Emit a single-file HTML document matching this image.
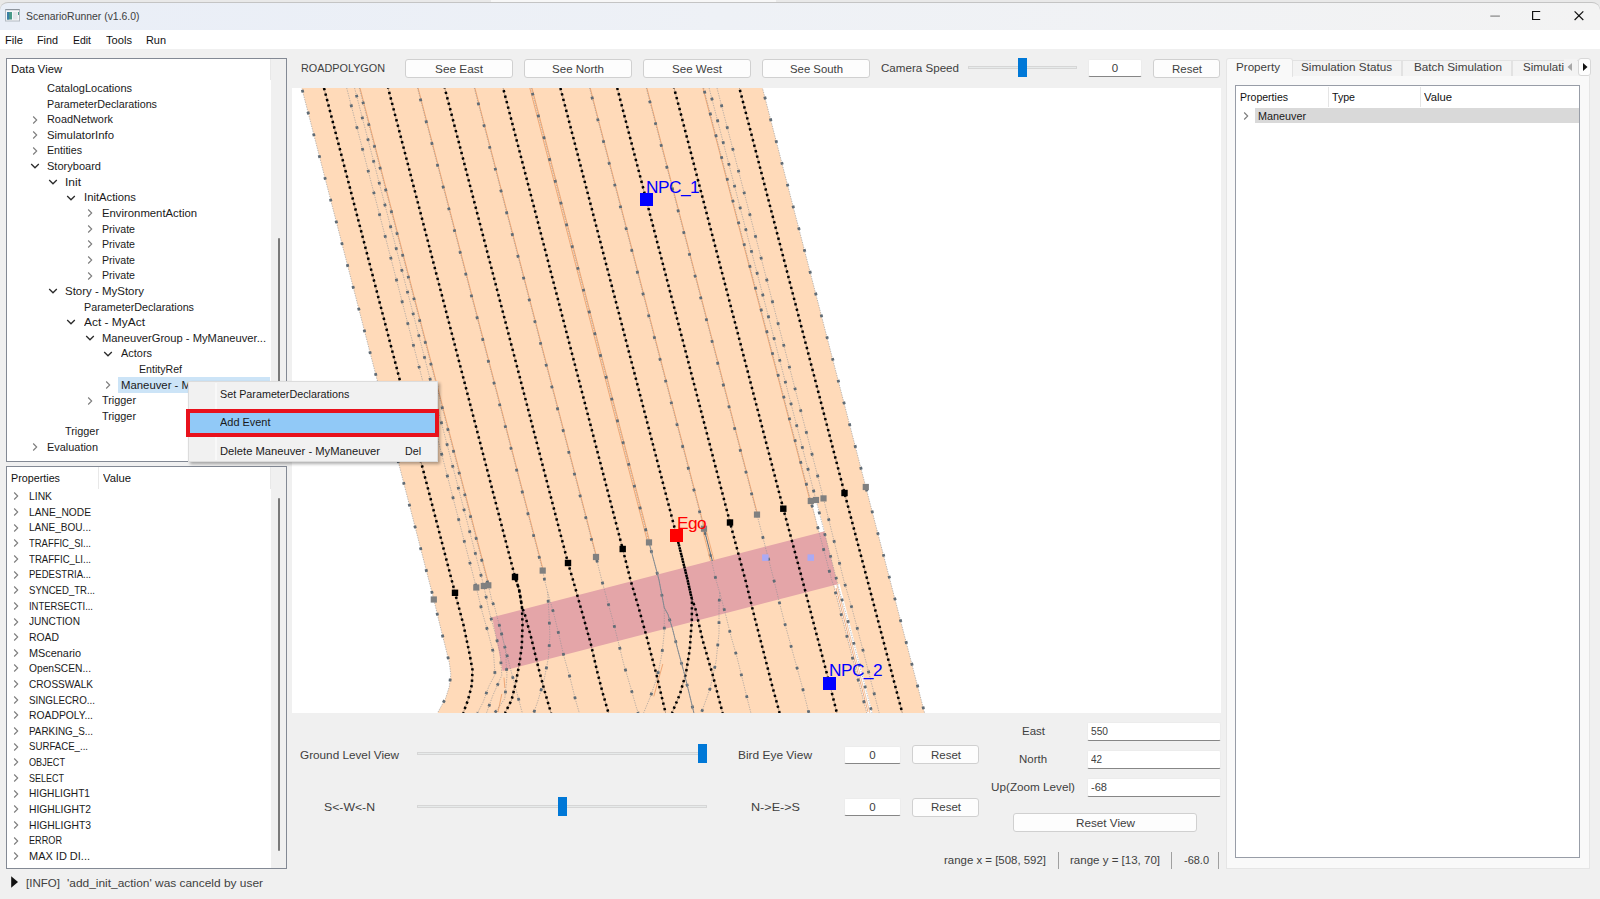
<!DOCTYPE html>
<html lang="en"><head><meta charset="utf-8"><title>ScenarioRunner (v1.6.0)</title>
<style>
html,body{margin:0;padding:0;background:#f0f0f0;}
body{width:1600px;height:899px;overflow:hidden;position:relative;font-family:"Liberation Sans","Noto Sans CJK KR",sans-serif;}
#app{position:absolute;left:0;top:0;width:1600px;height:899px;overflow:hidden;background:#f0f0f0;}
.t{position:absolute;white-space:nowrap;line-height:16px;height:16px;transform-origin:0 50%;}
.g{color:#333;}
.ic{position:absolute;overflow:visible;}
.btn{position:absolute;box-sizing:border-box;background:#fdfdfd;border:1px solid #d0d0d0;border-radius:3px;}
.inp{position:absolute;box-sizing:border-box;background:#fff;border:1px solid #ececec;border-bottom:1px solid #868686;border-radius:2px;}
</style></head>
<body><div id="app">
<div style="position:absolute;left:0.0px;top:0.0px;width:1600.0px;height:30.0px;background:#e9e9e9;"></div>
<div style="position:absolute;left:0.0px;top:2.0px;width:1600.0px;height:28.0px;box-sizing:border-box;background:linear-gradient(90deg,#e9eef7 0%,#eef1f6 45%,#f3f3f3 100%);border-top:1px solid #c4c4c4;border-radius:8px 8px 0 0;"></div>
<div style="position:absolute;left:491.0px;top:0.0px;width:285.0px;height:2.0px;background:#f7f7f7;"></div>
<svg class="ic" style="left:5px;top:9px" width="15" height="13" viewBox="0 0 15 13"><rect x="0.5" y="0.5" width="14" height="11.5" fill="#f6f7f9" stroke="#b4bac2"/><rect x="0.5" y="0" width="14" height="1.200" fill="#8e959e"/><rect x="2" y="3" width="5" height="7.500" fill="#4a9a88"/><rect x="2" y="3" width="2.200" height="7.500" fill="#3b7fa6"/><rect x="8" y="3" width="4.500" height="7.500" fill="#e3e6ea"/><rect x="13" y="3" width="1" height="3" fill="#4a9a88"/></svg>
<span class="t " style="left:26.0px;top:8.0px;font-size:11.50px;color:#404040;transform:scaleX(0.9059);">ScenarioRunner (v1.6.0)</span>
<svg class="ic" style="left:1480px;top:0" width="120" height="30" viewBox="0 0 120 30"><path d="M10.3 16.1 H19.9" stroke="#858585" stroke-width="1.200"/><path d="M60.2 11.5 H52.6 V19.5 H60.2" fill="none" stroke="#111" stroke-width="1.200"/><path d="M94.6 11.300 L103.3 20 M103.3 11.300 L94.6 20" stroke="#111" stroke-width="1.200"/></svg>
<div style="position:absolute;left:0.0px;top:30.0px;width:1600.0px;height:19.0px;background:#ffffff;"></div>
<span class="t " style="left:5.0px;top:32.0px;font-size:11.50px;color:#111;transform:scaleX(0.9714);">File</span>
<span class="t " style="left:37.0px;top:32.0px;font-size:11.50px;color:#111;transform:scaleX(0.9387);">Find</span>
<span class="t " style="left:73.0px;top:32.0px;font-size:11.50px;color:#111;transform:scaleX(0.9083);">Edit</span>
<span class="t " style="left:106.0px;top:32.0px;font-size:11.50px;color:#111;transform:scaleX(0.9685);">Tools</span>
<span class="t " style="left:146.0px;top:32.0px;font-size:11.50px;color:#111;transform:scaleX(0.9480);">Run</span>
<div style="position:absolute;left:6.0px;top:58.0px;width:281.0px;height:404.0px;box-sizing:border-box;background:#fff;border:1px solid #838994;"></div>
<div style="position:absolute;left:271.0px;top:59.0px;width:15.0px;height:402.0px;background:#f0f0f0;"></div>
<div style="position:absolute;left:270.0px;top:59.0px;width:1.0px;height:21.0px;background:#e8e8e8;"></div>
<div style="position:absolute;left:278.0px;top:238.0px;width:2.0px;height:217.0px;background:#7a7a7a;border-radius:1px;"></div>
<span class="t " style="left:11.3px;top:61.4px;font-size:11.50px;color:#111;transform:scaleX(0.9769);">Data View</span>
<span class="t " style="left:47.0px;top:80.0px;font-size:11.50px;color:#1a1a1a;transform:scaleX(0.9565);">CatalogLocations</span>
<span class="t " style="left:47.0px;top:95.6px;font-size:11.50px;color:#1a1a1a;transform:scaleX(0.9353);">ParameterDeclarations</span>
<svg class="ic" style="left:30.5px;top:114.5px" width="8" height="10" viewBox="0 0 8 10"><path d="M2.2 1.5 L5.700 5 L2.2 8.5" fill="none" stroke="#7c7c7c" stroke-width="1.100"/></svg>
<span class="t " style="left:47.0px;top:111.2px;font-size:11.50px;color:#1a1a1a;transform:scaleX(0.9473);">RoadNetwork</span>
<svg class="ic" style="left:30.5px;top:130.1px" width="8" height="10" viewBox="0 0 8 10"><path d="M2.2 1.5 L5.700 5 L2.2 8.5" fill="none" stroke="#7c7c7c" stroke-width="1.100"/></svg>
<span class="t " style="left:47.0px;top:126.8px;font-size:11.50px;color:#1a1a1a;transform:scaleX(0.9889);">SimulatorInfo</span>
<svg class="ic" style="left:30.5px;top:145.7px" width="8" height="10" viewBox="0 0 8 10"><path d="M2.2 1.5 L5.700 5 L2.2 8.5" fill="none" stroke="#7c7c7c" stroke-width="1.100"/></svg>
<span class="t " style="left:47.0px;top:142.4px;font-size:11.50px;color:#1a1a1a;transform:scaleX(0.9281);">Entities</span>
<svg class="ic" style="left:29.5px;top:162.4px" width="10" height="8" viewBox="0 0 10 8"><path d="M1.2 2 L5 5.8 L8.8 2" fill="none" stroke="#2b2b2b" stroke-width="1.3"/></svg>
<span class="t " style="left:47.0px;top:158.1px;font-size:11.50px;color:#1a1a1a;transform:scaleX(0.9599);">Storyboard</span>
<svg class="ic" style="left:47.9px;top:178.0px" width="10" height="8" viewBox="0 0 10 8"><path d="M1.2 2 L5 5.8 L8.8 2" fill="none" stroke="#2b2b2b" stroke-width="1.3"/></svg>
<span class="t " style="left:65.4px;top:173.7px;font-size:11.50px;color:#1a1a1a;transform:scaleX(1.0430);">Init</span>
<svg class="ic" style="left:66.3px;top:193.6px" width="10" height="8" viewBox="0 0 10 8"><path d="M1.2 2 L5 5.8 L8.8 2" fill="none" stroke="#2b2b2b" stroke-width="1.3"/></svg>
<span class="t " style="left:83.8px;top:189.3px;font-size:11.50px;color:#1a1a1a;transform:scaleX(0.9802);">InitActions</span>
<svg class="ic" style="left:85.7px;top:208.2px" width="8" height="10" viewBox="0 0 8 10"><path d="M2.2 1.5 L5.700 5 L2.2 8.5" fill="none" stroke="#7c7c7c" stroke-width="1.100"/></svg>
<span class="t " style="left:102.2px;top:204.9px;font-size:11.50px;color:#1a1a1a;transform:scaleX(0.9842);">EnvironmentAction</span>
<svg class="ic" style="left:85.7px;top:223.8px" width="8" height="10" viewBox="0 0 8 10"><path d="M2.2 1.5 L5.700 5 L2.2 8.5" fill="none" stroke="#7c7c7c" stroke-width="1.100"/></svg>
<span class="t " style="left:102.2px;top:220.5px;font-size:11.50px;color:#1a1a1a;transform:scaleX(0.9220);">Private</span>
<svg class="ic" style="left:85.7px;top:239.4px" width="8" height="10" viewBox="0 0 8 10"><path d="M2.2 1.5 L5.700 5 L2.2 8.5" fill="none" stroke="#7c7c7c" stroke-width="1.100"/></svg>
<span class="t " style="left:102.2px;top:236.1px;font-size:11.50px;color:#1a1a1a;transform:scaleX(0.9220);">Private</span>
<svg class="ic" style="left:85.7px;top:255.0px" width="8" height="10" viewBox="0 0 8 10"><path d="M2.2 1.5 L5.700 5 L2.2 8.5" fill="none" stroke="#7c7c7c" stroke-width="1.100"/></svg>
<span class="t " style="left:102.2px;top:251.7px;font-size:11.50px;color:#1a1a1a;transform:scaleX(0.9220);">Private</span>
<svg class="ic" style="left:85.7px;top:270.6px" width="8" height="10" viewBox="0 0 8 10"><path d="M2.2 1.5 L5.700 5 L2.2 8.5" fill="none" stroke="#7c7c7c" stroke-width="1.100"/></svg>
<span class="t " style="left:102.2px;top:267.3px;font-size:11.50px;color:#1a1a1a;transform:scaleX(0.9220);">Private</span>
<svg class="ic" style="left:47.9px;top:287.2px" width="10" height="8" viewBox="0 0 10 8"><path d="M1.2 2 L5 5.8 L8.8 2" fill="none" stroke="#2b2b2b" stroke-width="1.3"/></svg>
<span class="t " style="left:65.4px;top:282.9px;font-size:11.50px;color:#1a1a1a;transform:scaleX(0.9971);">Story - MyStory</span>
<span class="t " style="left:83.8px;top:298.5px;font-size:11.50px;color:#1a1a1a;transform:scaleX(0.9353);">ParameterDeclarations</span>
<svg class="ic" style="left:66.3px;top:318.4px" width="10" height="8" viewBox="0 0 10 8"><path d="M1.2 2 L5 5.8 L8.8 2" fill="none" stroke="#2b2b2b" stroke-width="1.3"/></svg>
<span class="t " style="left:83.8px;top:314.1px;font-size:11.50px;color:#1a1a1a;transform:scaleX(1.0378);">Act - MyAct</span>
<svg class="ic" style="left:84.7px;top:334.1px" width="10" height="8" viewBox="0 0 10 8"><path d="M1.2 2 L5 5.8 L8.8 2" fill="none" stroke="#2b2b2b" stroke-width="1.3"/></svg>
<span class="t " style="left:102.2px;top:329.8px;font-size:11.50px;color:#1a1a1a;transform:scaleX(0.9719);">ManeuverGroup - MyManeuver...</span>
<svg class="ic" style="left:103.1px;top:349.7px" width="10" height="8" viewBox="0 0 10 8"><path d="M1.2 2 L5 5.8 L8.8 2" fill="none" stroke="#2b2b2b" stroke-width="1.3"/></svg>
<span class="t " style="left:120.6px;top:345.4px;font-size:11.50px;color:#1a1a1a;transform:scaleX(0.9512);">Actors</span>
<span class="t " style="left:139.0px;top:361.0px;font-size:11.50px;color:#1a1a1a;transform:scaleX(0.9216);">EntityRef</span>
<div style="position:absolute;left:118.0px;top:376.6px;width:152.0px;height:16.0px;background:#cce4f7;"></div>
<svg class="ic" style="left:104.1px;top:379.9px" width="8" height="10" viewBox="0 0 8 10"><path d="M2.2 1.5 L5.700 5 L2.2 8.5" fill="none" stroke="#7c7c7c" stroke-width="1.100"/></svg>
<span class="t " style="left:120.6px;top:376.6px;font-size:11.50px;color:#1a1a1a;transform:scaleX(0.9868);">Maneuver - M</span>
<svg class="ic" style="left:85.7px;top:395.5px" width="8" height="10" viewBox="0 0 8 10"><path d="M2.2 1.5 L5.700 5 L2.2 8.5" fill="none" stroke="#7c7c7c" stroke-width="1.100"/></svg>
<span class="t " style="left:102.2px;top:392.2px;font-size:11.50px;color:#1a1a1a;transform:scaleX(0.9445);">Trigger</span>
<span class="t " style="left:102.2px;top:407.8px;font-size:11.50px;color:#1a1a1a;transform:scaleX(0.9445);">Trigger</span>
<span class="t " style="left:65.4px;top:423.4px;font-size:11.50px;color:#1a1a1a;transform:scaleX(0.9445);">Trigger</span>
<svg class="ic" style="left:30.5px;top:442.3px" width="8" height="10" viewBox="0 0 8 10"><path d="M2.2 1.5 L5.700 5 L2.2 8.5" fill="none" stroke="#7c7c7c" stroke-width="1.100"/></svg>
<span class="t " style="left:47.0px;top:439.0px;font-size:11.50px;color:#1a1a1a;transform:scaleX(0.9496);">Evaluation</span>
<div style="position:absolute;left:6.0px;top:466.0px;width:281.0px;height:403.0px;box-sizing:border-box;background:#fff;border:1px solid #838994;"></div>
<div style="position:absolute;left:271.0px;top:467.0px;width:15.0px;height:401.0px;background:#f0f0f0;"></div>
<div style="position:absolute;left:98.0px;top:467.0px;width:1.0px;height:22.0px;background:#e8e8e8;"></div>
<div style="position:absolute;left:270.0px;top:467.0px;width:1.0px;height:22.0px;background:#e8e8e8;"></div>
<div style="position:absolute;left:278.0px;top:498.0px;width:2.0px;height:353.0px;background:#7a7a7a;border-radius:1px;"></div>
<span class="t " style="left:11.0px;top:469.8px;font-size:11.50px;color:#111;transform:scaleX(0.9349);">Properties</span>
<span class="t " style="left:103.0px;top:469.8px;font-size:11.50px;color:#111;transform:scaleX(0.9804);">Value</span>
<svg class="ic" style="left:12.0px;top:491.3px" width="8" height="10" viewBox="0 0 8 10"><path d="M2.2 1.5 L5.700 5 L2.2 8.5" fill="none" stroke="#7c7c7c" stroke-width="1.100"/></svg>
<span class="t " style="left:28.5px;top:488.0px;font-size:11.50px;color:#1a1a1a;transform:scaleX(0.8996);">LINK</span>
<svg class="ic" style="left:12.0px;top:506.9px" width="8" height="10" viewBox="0 0 8 10"><path d="M2.2 1.5 L5.700 5 L2.2 8.5" fill="none" stroke="#7c7c7c" stroke-width="1.100"/></svg>
<span class="t " style="left:28.5px;top:503.6px;font-size:11.50px;color:#1a1a1a;transform:scaleX(0.8900);">LANE_NODE</span>
<svg class="ic" style="left:12.0px;top:522.6px" width="8" height="10" viewBox="0 0 8 10"><path d="M2.2 1.5 L5.700 5 L2.2 8.5" fill="none" stroke="#7c7c7c" stroke-width="1.100"/></svg>
<span class="t " style="left:28.5px;top:519.3px;font-size:11.50px;color:#1a1a1a;transform:scaleX(0.8739);">LANE_BOU...</span>
<svg class="ic" style="left:12.0px;top:538.2px" width="8" height="10" viewBox="0 0 8 10"><path d="M2.2 1.5 L5.700 5 L2.2 8.5" fill="none" stroke="#7c7c7c" stroke-width="1.100"/></svg>
<span class="t " style="left:28.5px;top:535.0px;font-size:11.50px;color:#1a1a1a;transform:scaleX(0.8223);">TRAFFIC_SI...</span>
<svg class="ic" style="left:12.0px;top:553.9px" width="8" height="10" viewBox="0 0 8 10"><path d="M2.2 1.5 L5.700 5 L2.2 8.5" fill="none" stroke="#7c7c7c" stroke-width="1.100"/></svg>
<span class="t " style="left:28.5px;top:550.6px;font-size:11.50px;color:#1a1a1a;transform:scaleX(0.8365);">TRAFFIC_LI...</span>
<svg class="ic" style="left:12.0px;top:569.5px" width="8" height="10" viewBox="0 0 8 10"><path d="M2.2 1.5 L5.700 5 L2.2 8.5" fill="none" stroke="#7c7c7c" stroke-width="1.100"/></svg>
<span class="t " style="left:28.5px;top:566.2px;font-size:11.50px;color:#1a1a1a;transform:scaleX(0.8292);">PEDESTRIA...</span>
<svg class="ic" style="left:12.0px;top:585.2px" width="8" height="10" viewBox="0 0 8 10"><path d="M2.2 1.5 L5.700 5 L2.2 8.5" fill="none" stroke="#7c7c7c" stroke-width="1.100"/></svg>
<span class="t " style="left:28.5px;top:581.9px;font-size:11.50px;color:#1a1a1a;transform:scaleX(0.8329);">SYNCED_TR...</span>
<svg class="ic" style="left:12.0px;top:600.8px" width="8" height="10" viewBox="0 0 8 10"><path d="M2.2 1.5 L5.700 5 L2.2 8.5" fill="none" stroke="#7c7c7c" stroke-width="1.100"/></svg>
<span class="t " style="left:28.5px;top:597.5px;font-size:11.50px;color:#1a1a1a;transform:scaleX(0.8210);">INTERSECTI...</span>
<svg class="ic" style="left:12.0px;top:616.5px" width="8" height="10" viewBox="0 0 8 10"><path d="M2.2 1.5 L5.700 5 L2.2 8.5" fill="none" stroke="#7c7c7c" stroke-width="1.100"/></svg>
<span class="t " style="left:28.5px;top:613.2px;font-size:11.50px;color:#1a1a1a;transform:scaleX(0.8773);">JUNCTION</span>
<svg class="ic" style="left:12.0px;top:632.1px" width="8" height="10" viewBox="0 0 8 10"><path d="M2.2 1.5 L5.700 5 L2.2 8.5" fill="none" stroke="#7c7c7c" stroke-width="1.100"/></svg>
<span class="t " style="left:28.5px;top:628.9px;font-size:11.50px;color:#1a1a1a;transform:scaleX(0.9029);">ROAD</span>
<svg class="ic" style="left:12.0px;top:647.8px" width="8" height="10" viewBox="0 0 8 10"><path d="M2.2 1.5 L5.700 5 L2.2 8.5" fill="none" stroke="#7c7c7c" stroke-width="1.100"/></svg>
<span class="t " style="left:28.5px;top:644.5px;font-size:11.50px;color:#1a1a1a;transform:scaleX(0.9460);">MScenario</span>
<svg class="ic" style="left:12.0px;top:663.4px" width="8" height="10" viewBox="0 0 8 10"><path d="M2.2 1.5 L5.700 5 L2.2 8.5" fill="none" stroke="#7c7c7c" stroke-width="1.100"/></svg>
<span class="t " style="left:28.5px;top:660.1px;font-size:11.50px;color:#1a1a1a;transform:scaleX(0.8899);">OpenSCEN...</span>
<svg class="ic" style="left:12.0px;top:679.1px" width="8" height="10" viewBox="0 0 8 10"><path d="M2.2 1.5 L5.700 5 L2.2 8.5" fill="none" stroke="#7c7c7c" stroke-width="1.100"/></svg>
<span class="t " style="left:28.5px;top:675.8px;font-size:11.50px;color:#1a1a1a;transform:scaleX(0.8760);">CROSSWALK</span>
<svg class="ic" style="left:12.0px;top:694.8px" width="8" height="10" viewBox="0 0 8 10"><path d="M2.2 1.5 L5.700 5 L2.2 8.5" fill="none" stroke="#7c7c7c" stroke-width="1.100"/></svg>
<span class="t " style="left:28.5px;top:691.5px;font-size:11.50px;color:#1a1a1a;transform:scaleX(0.8536);">SINGLECRO...</span>
<svg class="ic" style="left:12.0px;top:710.4px" width="8" height="10" viewBox="0 0 8 10"><path d="M2.2 1.5 L5.700 5 L2.2 8.5" fill="none" stroke="#7c7c7c" stroke-width="1.100"/></svg>
<span class="t " style="left:28.5px;top:707.1px;font-size:11.50px;color:#1a1a1a;transform:scaleX(0.8994);">ROADPOLY...</span>
<svg class="ic" style="left:12.0px;top:726.0px" width="8" height="10" viewBox="0 0 8 10"><path d="M2.2 1.5 L5.700 5 L2.2 8.5" fill="none" stroke="#7c7c7c" stroke-width="1.100"/></svg>
<span class="t " style="left:28.5px;top:722.8px;font-size:11.50px;color:#1a1a1a;transform:scaleX(0.8584);">PARKING_S...</span>
<svg class="ic" style="left:12.0px;top:741.7px" width="8" height="10" viewBox="0 0 8 10"><path d="M2.2 1.5 L5.700 5 L2.2 8.5" fill="none" stroke="#7c7c7c" stroke-width="1.100"/></svg>
<span class="t " style="left:28.5px;top:738.4px;font-size:11.50px;color:#1a1a1a;transform:scaleX(0.8393);">SURFACE_...</span>
<svg class="ic" style="left:12.0px;top:757.3px" width="8" height="10" viewBox="0 0 8 10"><path d="M2.2 1.5 L5.700 5 L2.2 8.5" fill="none" stroke="#7c7c7c" stroke-width="1.100"/></svg>
<span class="t " style="left:28.5px;top:754.0px;font-size:11.50px;color:#1a1a1a;transform:scaleX(0.7936);">OBJECT</span>
<svg class="ic" style="left:12.0px;top:773.0px" width="8" height="10" viewBox="0 0 8 10"><path d="M2.2 1.5 L5.700 5 L2.2 8.5" fill="none" stroke="#7c7c7c" stroke-width="1.100"/></svg>
<span class="t " style="left:28.5px;top:769.7px;font-size:11.50px;color:#1a1a1a;transform:scaleX(0.7824);">SELECT</span>
<svg class="ic" style="left:12.0px;top:788.6px" width="8" height="10" viewBox="0 0 8 10"><path d="M2.2 1.5 L5.700 5 L2.2 8.5" fill="none" stroke="#7c7c7c" stroke-width="1.100"/></svg>
<span class="t " style="left:28.5px;top:785.4px;font-size:11.50px;color:#1a1a1a;transform:scaleX(0.8839);">HIGHLIGHT1</span>
<svg class="ic" style="left:12.0px;top:804.3px" width="8" height="10" viewBox="0 0 8 10"><path d="M2.2 1.5 L5.700 5 L2.2 8.5" fill="none" stroke="#7c7c7c" stroke-width="1.100"/></svg>
<span class="t " style="left:28.5px;top:801.0px;font-size:11.50px;color:#1a1a1a;transform:scaleX(0.8984);">HIGHLIGHT2</span>
<svg class="ic" style="left:12.0px;top:820.0px" width="8" height="10" viewBox="0 0 8 10"><path d="M2.2 1.5 L5.700 5 L2.2 8.5" fill="none" stroke="#7c7c7c" stroke-width="1.100"/></svg>
<span class="t " style="left:28.5px;top:816.7px;font-size:11.50px;color:#1a1a1a;transform:scaleX(0.8984);">HIGHLIGHT3</span>
<svg class="ic" style="left:12.0px;top:835.6px" width="8" height="10" viewBox="0 0 8 10"><path d="M2.2 1.5 L5.700 5 L2.2 8.5" fill="none" stroke="#7c7c7c" stroke-width="1.100"/></svg>
<span class="t " style="left:28.5px;top:832.3px;font-size:11.50px;color:#1a1a1a;transform:scaleX(0.7946);">ERROR</span>
<svg class="ic" style="left:12.0px;top:851.2px" width="8" height="10" viewBox="0 0 8 10"><path d="M2.2 1.5 L5.700 5 L2.2 8.5" fill="none" stroke="#7c7c7c" stroke-width="1.100"/></svg>
<span class="t " style="left:28.5px;top:848.0px;font-size:11.50px;color:#1a1a1a;transform:scaleX(0.9547);">MAX ID DI...</span>
<svg class="ic" style="left:10.5px;top:876px" width="8" height="12" viewBox="0 0 8 12"><path d="M0.2 0.2 L7 6 L0.2 11.800 Z" fill="#111"/></svg>
<span class="t " style="left:26.3px;top:874.6px;font-size:11.50px;color:#404040;transform:scaleX(1.0041);">[INFO]</span>
<span class="t " style="left:67.3px;top:874.6px;font-size:11.50px;color:#404040;transform:scaleX(1.0362);">&#x27;add_init_action&#x27; was canceld by user</span>
<span class="t " style="left:301.0px;top:60.0px;font-size:11.50px;color:#404040;transform:scaleX(0.9412);">ROADPOLYGON</span>
<div class="btn" style="left:405.0px;top:59.0px;width:108.0px;height:19.0px"></div>
<span class="t " style="left:435.0px;top:60.5px;font-size:11.50px;color:#404040;transform:scaleX(1.0285);">See East</span>
<div class="btn" style="left:524.0px;top:59.0px;width:108.0px;height:19.0px"></div>
<span class="t " style="left:552.0px;top:60.5px;font-size:11.50px;color:#404040;transform:scaleX(1.0043);">See North</span>
<div class="btn" style="left:643.0px;top:59.0px;width:108.0px;height:19.0px"></div>
<span class="t " style="left:672.0px;top:60.5px;font-size:11.50px;color:#404040;transform:scaleX(1.0072);">See West</span>
<div class="btn" style="left:762.0px;top:59.0px;width:108.0px;height:19.0px"></div>
<span class="t " style="left:789.5px;top:60.5px;font-size:11.50px;color:#404040;transform:scaleX(0.9868);">See South</span>
<span class="t " style="left:881.0px;top:60.0px;font-size:11.50px;color:#404040;transform:scaleX(1.0084);">Camera Speed</span>
<div style="position:absolute;left:968.0px;top:65.5px;width:109.0px;height:3.0px;box-sizing:border-box;background:#e7eaea;border:1px solid #d6d6d6;"></div>
<div style="position:absolute;left:1018.0px;top:58.0px;width:9.0px;height:19.0px;background:#0078d7;"></div>
<div class="inp" style="left:1088.0px;top:59.0px;width:54.0px;height:18.0px"></div>
<span class="t " style="left:1111.8px;top:60.0px;font-size:11.50px;color:#404040;">0</span>
<div class="btn" style="left:1153.0px;top:59.0px;width:67.0px;height:19.0px"></div>
<span class="t " style="left:1171.5px;top:60.5px;font-size:11.50px;color:#404040;transform:scaleX(0.9986);">Reset</span>
<span class="t " style="left:300.0px;top:746.5px;font-size:11.50px;color:#404040;transform:scaleX(1.0211);">Ground Level View</span>
<div style="position:absolute;left:417.0px;top:751.5px;width:290.0px;height:3.0px;box-sizing:border-box;background:#e7eaea;border:1px solid #d6d6d6;"></div>
<div style="position:absolute;left:698.0px;top:744.0px;width:9.0px;height:19.0px;background:#0078d7;"></div>
<span class="t " style="left:738.0px;top:747.0px;font-size:11.50px;color:#404040;transform:scaleX(1.0368);">Bird Eye View</span>
<div class="inp" style="left:844.0px;top:745.5px;width:57.0px;height:18.5px"></div>
<span class="t " style="left:869.3px;top:746.5px;font-size:11.50px;color:#404040;">0</span>
<div class="btn" style="left:912.0px;top:745.0px;width:67.0px;height:19.0px"></div>
<span class="t " style="left:930.5px;top:746.5px;font-size:11.50px;color:#404040;transform:scaleX(0.9986);">Reset</span>
<span class="t " style="left:324.0px;top:799.0px;font-size:11.50px;color:#404040;transform:scaleX(1.0643);">S&lt;-W&lt;-N</span>
<div style="position:absolute;left:417.0px;top:804.5px;width:290.0px;height:3.0px;box-sizing:border-box;background:#e7eaea;border:1px solid #d6d6d6;"></div>
<div style="position:absolute;left:558.0px;top:797.0px;width:9.0px;height:19.0px;background:#0078d7;"></div>
<span class="t " style="left:751.0px;top:799.0px;font-size:11.50px;color:#404040;transform:scaleX(1.0953);">N-&gt;E-&gt;S</span>
<div class="inp" style="left:844.0px;top:797.5px;width:57.0px;height:18.5px"></div>
<span class="t " style="left:869.3px;top:798.5px;font-size:11.50px;color:#404040;">0</span>
<div class="btn" style="left:912.0px;top:797.5px;width:67.0px;height:19.0px"></div>
<span class="t " style="left:930.5px;top:799.0px;font-size:11.50px;color:#404040;transform:scaleX(0.9986);">Reset</span>
<span class="t " style="left:1022.0px;top:723.0px;font-size:11.50px;color:#404040;transform:scaleX(0.9995);">East</span>
<div class="inp" style="left:1087.0px;top:722.0px;width:133.5px;height:18.7px"></div>
<span class="t " style="left:1091.0px;top:723.0px;font-size:11.50px;color:#404040;transform:scaleX(0.8860);">550</span>
<span class="t " style="left:1019.0px;top:751.0px;font-size:11.50px;color:#404040;transform:scaleX(0.9957);">North</span>
<div class="inp" style="left:1087.0px;top:750.0px;width:133.5px;height:18.7px"></div>
<span class="t " style="left:1091.0px;top:751.0px;font-size:11.50px;color:#404040;transform:scaleX(0.8599);">42</span>
<span class="t " style="left:991.0px;top:779.0px;font-size:11.50px;color:#404040;transform:scaleX(1.0189);">Up(Zoom Level)</span>
<div class="inp" style="left:1087.0px;top:778.0px;width:133.5px;height:18.7px"></div>
<span class="t " style="left:1091.0px;top:779.0px;font-size:11.50px;color:#404040;transform:scaleX(0.9626);">-68</span>
<div class="btn" style="left:1013.0px;top:813.0px;width:184.0px;height:19.0px"></div>
<span class="t " style="left:1075.5px;top:814.5px;font-size:11.50px;color:#404040;transform:scaleX(1.0180);">Reset View</span>
<span class="t " style="left:944.0px;top:852.0px;font-size:11.50px;color:#404040;transform:scaleX(0.9940);">range x = [508, 592]</span>
<div style="position:absolute;left:1058.0px;top:852.0px;width:1.0px;height:17.0px;background:#a0a0a0;"></div>
<span class="t " style="left:1070.0px;top:852.0px;font-size:11.50px;color:#404040;transform:scaleX(1.0019);">range y = [13, 70]</span>
<div style="position:absolute;left:1171.0px;top:852.0px;width:1.0px;height:17.0px;background:#a0a0a0;"></div>
<span class="t " style="left:1184.0px;top:852.0px;font-size:11.50px;color:#404040;transform:scaleX(0.9538);">-68.0</span>
<div style="position:absolute;left:1218.0px;top:852.0px;width:1.0px;height:17.0px;background:#a0a0a0;"></div>
<div style="position:absolute;left:1226.0px;top:75.0px;width:363.5px;height:793.5px;box-sizing:border-box;background:#f9f9f9;border:1px solid #e5e5e5;"></div>
<div style="position:absolute;left:1226.0px;top:58.0px;width:67.0px;height:19.0px;box-sizing:border-box;background:#f9f9f9;border:1px solid #e5e5e5;border-bottom:none;border-radius:3px 3px 0 0;"></div>
<div style="position:absolute;left:1292.0px;top:60.0px;width:110.0px;height:16.0px;box-sizing:border-box;background:#f3f3f3;border:1px solid #e2e2e2;border-bottom:none;"></div>
<div style="position:absolute;left:1402.0px;top:60.0px;width:110.0px;height:16.0px;box-sizing:border-box;background:#f3f3f3;border:1px solid #e2e2e2;border-bottom:none;"></div>
<div style="position:absolute;left:1512.0px;top:60.0px;width:78.0px;height:16.0px;box-sizing:border-box;background:#f3f3f3;border:1px solid #e2e2e2;border-bottom:none;border-right:none;"></div>
<span class="t " style="left:1236.0px;top:58.5px;font-size:11.50px;color:#404040;transform:scaleX(1.0124);">Property</span>
<span class="t " style="left:1301.0px;top:59.3px;font-size:11.50px;color:#404040;transform:scaleX(1.0169);">Simulation Status</span>
<span class="t " style="left:1414.0px;top:59.3px;font-size:11.50px;color:#404040;transform:scaleX(1.0198);">Batch Simulation</span>
<span class="t " style="left:1523.0px;top:59.3px;font-size:11.50px;color:#404040;transform:scaleX(1.0024);">Simulati</span>
<div style="position:absolute;left:1564.0px;top:59.0px;width:13.0px;height:17.0px;background:#f3f3f3;"></div>
<svg class="ic" style="left:1566px;top:62px" width="8" height="10" viewBox="0 0 8 10"><path d="M6 1 L1.500 5 L6 9 Z" fill="#a8a8a8"/></svg>
<div style="position:absolute;left:1578.0px;top:58.0px;width:13.0px;height:18.0px;box-sizing:border-box;background:#fdfdfd;border:1px solid #d8d8d8;border-radius:3px;"></div>
<svg class="ic" style="left:1581px;top:62px" width="8" height="10" viewBox="0 0 8 10"><path d="M2 1 L6.500 5 L2 9 Z" fill="#111"/></svg>
<div style="position:absolute;left:1235.0px;top:85.0px;width:345.0px;height:772.5px;box-sizing:border-box;background:#fff;border:1px solid #989da7;"></div>
<div style="position:absolute;left:1328.0px;top:87.0px;width:1.0px;height:20.0px;background:#e5e5e5;"></div>
<div style="position:absolute;left:1420.0px;top:87.0px;width:1.0px;height:20.0px;background:#e5e5e5;"></div>
<span class="t " style="left:1240.0px;top:89.0px;font-size:11.50px;color:#111;transform:scaleX(0.9158);">Properties</span>
<span class="t " style="left:1332.0px;top:89.0px;font-size:11.50px;color:#111;transform:scaleX(0.9225);">Type</span>
<span class="t " style="left:1424.0px;top:89.0px;font-size:11.50px;color:#111;transform:scaleX(0.9804);">Value</span>
<div style="position:absolute;left:1255.0px;top:108.0px;width:324.0px;height:14.5px;background:#d9d9d9;"></div>
<svg class="ic" style="left:1241.5px;top:110.5px" width="8" height="10" viewBox="0 0 8 10"><path d="M2.2 1.5 L5.700 5 L2.2 8.5" fill="none" stroke="#7c7c7c" stroke-width="1.100"/></svg>
<span class="t " style="left:1258.0px;top:107.5px;font-size:11.50px;color:#1a1a1a;transform:scaleX(0.9386);">Maneuver</span>
<div style="position:absolute;left:292px;top:88px;width:929px;height:624.7px;background:#fff;overflow:hidden"><svg width="929" height="625" viewBox="292 88 929 625" style="position:absolute;left:0;top:0;font-family:'Liberation Sans',sans-serif" shape-rendering="auto"><polygon points="301.5,87.0 433.8,599.5 439.5,623.5 444.8,644.6 449.3,662.6 450.8,674.6 449.3,686.6 445.5,698.6 437.5,713.0 924.6,713.0 865.8,487.0 762.2,87.0" fill="#ffdab9"/>
<polygon points="812,503.5 817,503 824.6,531.2 819.2,532.6" fill="#fff"/>
<polygon points="834.2,585.2 839.6,583.8 872.6,713 867.2,713" fill="#fff"/>
<polyline points="836.9,585 869.9,713" fill="none" stroke="#f6c9a6" stroke-width="1.1"/>
<polygon points="492.2,617.3 824.3,531.5 837.6,584.2 502.6,670.9" fill="#e4a5a8"/>
<polyline points="360.0,88.0 489.0,585.3" fill="none" stroke="#ec9f6a" stroke-width="0.95" stroke-opacity="0.9"/>
<polyline points="418.1,88.0 543.3,570.6" fill="none" stroke="#ec9f6a" stroke-width="0.95" stroke-opacity="0.9"/>
<polyline points="474.9,88.0 596.6,557.0" fill="none" stroke="#ec9f6a" stroke-width="0.95" stroke-opacity="0.9"/>
<polyline points="532.0,88.0 649.9,542.4" fill="none" stroke="#ec9f6a" stroke-width="0.95" stroke-opacity="0.9"/>
<polyline points="529.8,88.0 647.7,542.4" fill="none" stroke="#ec9f6a" stroke-width="0.95" stroke-opacity="0.9"/>
<polyline points="590.2,88.0 704.6,528.7" fill="none" stroke="#ec9f6a" stroke-width="0.95" stroke-opacity="0.9"/>
<polyline points="646.9,88.0 757.6,514.6" fill="none" stroke="#ec9f6a" stroke-width="0.95" stroke-opacity="0.9"/>
<polyline points="702.9,88.0 810.1,501.0" fill="none" stroke="#ec9f6a" stroke-width="0.95" stroke-opacity="0.9"/>
<polyline points="504.0,677.6 504.8,688.0" fill="none" stroke="#ec9f6a" stroke-width="0.95" stroke-opacity="0.9"/>
<polyline points="501.8,694.0 498.0,712.0" fill="none" stroke="#ec9f6a" stroke-width="0.95" stroke-opacity="0.9"/>
<polyline points="662.8,664.0 653.8,696.4" fill="none" stroke="#ec9f6a" stroke-width="0.95" stroke-opacity="0.9"/>
<polyline points="836.0,588.0 868.0,712.0" fill="none" stroke="#ec9f6a" stroke-width="0.95" stroke-opacity="0.9"/>
<polyline points="301.5,87.0 433.8,599.5 439.5,623.5 444.8,644.6 449.3,662.6 450.8,674.6 449.3,686.6 445.5,698.6 437.5,713.0" fill="none" stroke="#8d9094" stroke-width="0.7" stroke-opacity="0.85" stroke-dasharray="1.3 1.2"/>
<polyline points="301.5,87.0 433.8,599.5 439.5,623.5 444.8,644.6 449.3,662.6 450.8,674.6 449.3,686.6 445.5,698.6 437.5,713.0" fill="none" stroke="#5f6b75" stroke-width="2.800" stroke-dasharray="2.700 19.8" stroke-dashoffset="-3.0"/>
<polyline points="762.2,87.0 865.8,487.0 924.6,713.0" fill="none" stroke="#8d9094" stroke-width="0.7" stroke-opacity="0.85" stroke-dasharray="1.3 1.2"/>
<polyline points="762.2,87.0 865.8,487.0 924.6,713.0" fill="none" stroke="#5f6b75" stroke-width="2.800" stroke-dasharray="2.700 19.8" stroke-dashoffset="-10.0"/>
<polyline points="346.7,88.0 476.3,587.5 482.3,612.3 488.3,633.3 493.6,653.6 495.0,674.6 489.0,685.9 483.0,702.4 477.5,713.0" fill="none" stroke="#8d9094" stroke-width="0.7" stroke-opacity="0.85" stroke-dasharray="1.3 1.2"/>
<polyline points="346.7,88.0 476.3,587.5 482.3,612.3 488.3,633.3 493.6,653.6 495.0,674.6 489.0,685.9 483.0,702.4 477.5,713.0" fill="none" stroke="#5f6b75" stroke-width="2.800" stroke-dasharray="2.700 19.8" stroke-dashoffset="-17.0"/>
<polyline points="354.6,88.0 483.8,586.0 489.0,610.8 495.0,632.5 500.3,653.6 501.8,675.3 492.8,695.6 486.5,713.0" fill="none" stroke="#8d9094" stroke-width="0.7" stroke-opacity="0.85" stroke-dasharray="1.3 1.2"/>
<polyline points="354.6,88.0 483.8,586.0 489.0,610.8 495.0,632.5 500.3,653.6 501.8,675.3 492.8,695.6 486.5,713.0" fill="none" stroke="#5f6b75" stroke-width="2.800" stroke-dasharray="2.700 19.8" stroke-dashoffset="-7.0"/>
<polyline points="359.3,88.0 488.3,585.3 492.0,601.0 494.6,607.0 500.3,628.8 505.3,649.0 507.0,676.0 504.8,698.6 494.7,713.0" fill="none" stroke="#8d9094" stroke-width="0.7" stroke-opacity="0.85" stroke-dasharray="1.3 1.2"/>
<polyline points="359.3,88.0 488.3,585.3 492.0,601.0 494.6,607.0 500.3,628.8 505.3,649.0 507.0,676.0 504.8,698.6 494.7,713.0" fill="none" stroke="#5f6b75" stroke-width="2.800" stroke-dasharray="2.700 19.8" stroke-dashoffset="-14.0"/>
<polyline points="500.3,628.8 510.8,670.0 522.3,713.0" fill="none" stroke="#8d9094" stroke-width="0.7" stroke-opacity="0.85" stroke-dasharray="1.3 1.2"/>
<polyline points="500.3,628.8 510.8,670.0 522.3,713.0" fill="none" stroke="#5f6b75" stroke-width="2.800" stroke-dasharray="2.700 19.8" stroke-dashoffset="-4.0"/>
<polyline points="417.5,88.0 542.7,570.6 544.6,580.0 547.6,592.0 549.0,613.8" fill="none" stroke="#8d9094" stroke-width="0.7" stroke-opacity="0.85" stroke-dasharray="1.3 1.2"/>
<polyline points="417.5,88.0 542.7,570.6 544.6,580.0 547.6,592.0 549.0,613.8" fill="none" stroke="#5f6b75" stroke-width="2.800" stroke-dasharray="2.700 19.8" stroke-dashoffset="-11.0"/>
<polyline points="547.6,592.0 553.6,613.0 558.9,634.8 564.0,656.6 570.0,677.6 575.4,699.4 579.3,713.0" fill="none" stroke="#8d9094" stroke-width="0.7" stroke-opacity="0.85" stroke-dasharray="1.3 1.2"/>
<polyline points="547.6,592.0 553.6,613.0 558.9,634.8 564.0,656.6 570.0,677.6 575.4,699.4 579.3,713.0" fill="none" stroke="#5f6b75" stroke-width="2.800" stroke-dasharray="2.700 19.8" stroke-dashoffset="-18.0"/>
<polyline points="549.0,613.8 549.9,635.6 548.4,658.0 543.9,680.6 537.9,700.9 533.7,713.0" fill="none" stroke="#8d9094" stroke-width="0.7" stroke-opacity="0.85" stroke-dasharray="1.3 1.2"/>
<polyline points="549.0,613.8 549.9,635.6 548.4,658.0 543.9,680.6 537.9,700.9 533.7,713.0" fill="none" stroke="#5f6b75" stroke-width="2.800" stroke-dasharray="2.700 19.8" stroke-dashoffset="-8.0"/>
<polyline points="474.3,88.0 596.0,557.0 601.7,580.0 606.9,598.8 612.9,620.5 618.2,641.6 623.5,663.3 630.2,685.9 636.2,706.9 638.2,713.0" fill="none" stroke="#8d9094" stroke-width="0.7" stroke-opacity="0.85" stroke-dasharray="1.3 1.2"/>
<polyline points="474.3,88.0 596.0,557.0 601.7,580.0 606.9,598.8 612.9,620.5 618.2,641.6 623.5,663.3 630.2,685.9 636.2,706.9 638.2,713.0" fill="none" stroke="#5f6b75" stroke-width="2.800" stroke-dasharray="2.700 19.8" stroke-dashoffset="-15.0"/>
<polyline points="531.1,88.0 649.0,542.4 659.0,580.0 664.3,607.8" fill="none" stroke="#8d9094" stroke-width="0.7" stroke-opacity="0.85" stroke-dasharray="1.3 1.2"/>
<polyline points="531.1,88.0 649.0,542.4 659.0,580.0 664.3,607.8" fill="none" stroke="#5f6b75" stroke-width="2.800" stroke-dasharray="2.700 19.8" stroke-dashoffset="-5.0"/>
<polyline points="664.3,607.8 668.0,614.5 672.5,628.8 677.8,649.8 683.8,671.6 689.0,692.6 693.9,713.0" fill="none" stroke="#7f8488" stroke-width="0.7" stroke-opacity="0.85" stroke-dasharray="1.3 1.2"/>
<polyline points="664.3,607.8 668.0,614.5 672.5,628.8 677.8,649.8 683.8,671.6 689.0,692.6 693.9,713.0" fill="none" stroke="#5f6b75" stroke-width="2.800" stroke-dasharray="2.700 19.8" stroke-dashoffset="-12.0"/>
<polyline points="664.3,607.8 664.3,631.8 662.0,653.6 657.5,676.0 650.8,695.6 643.6,713.0" fill="none" stroke="#8d9094" stroke-width="0.7" stroke-opacity="0.85" stroke-dasharray="1.3 1.2"/>
<polyline points="664.3,607.8 664.3,631.8 662.0,653.6 657.5,676.0 650.8,695.6 643.6,713.0" fill="none" stroke="#5f6b75" stroke-width="2.800" stroke-dasharray="2.700 19.8" stroke-dashoffset="-19.0"/>
<polyline points="589.6,88.0 704.0,528.7 716.0,580.0 719.8,592.8" fill="none" stroke="#8d9094" stroke-width="0.7" stroke-opacity="0.85" stroke-dasharray="1.3 1.2"/>
<polyline points="589.6,88.0 704.0,528.7 716.0,580.0 719.8,592.8" fill="none" stroke="#5f6b75" stroke-width="2.800" stroke-dasharray="2.700 19.8" stroke-dashoffset="-9.0"/>
<polyline points="719.8,592.8 725.8,615.3 731.0,636.3 737.0,657.3 742.4,679.0 747.6,700.0 750.9,713.0" fill="none" stroke="#8d9094" stroke-width="0.7" stroke-opacity="0.85" stroke-dasharray="1.3 1.2"/>
<polyline points="719.8,592.8 725.8,615.3 731.0,636.3 737.0,657.3 742.4,679.0 747.6,700.0 750.9,713.0" fill="none" stroke="#5f6b75" stroke-width="2.800" stroke-dasharray="2.700 19.8" stroke-dashoffset="-16.0"/>
<polyline points="719.8,592.8 719.0,604.8 719.0,633.3 716.0,661.8 710.0,688.8 701.3,713.0" fill="none" stroke="#8d9094" stroke-width="0.7" stroke-opacity="0.85" stroke-dasharray="1.3 1.2"/>
<polyline points="719.8,592.8 719.0,604.8 719.0,633.3 716.0,661.8 710.0,688.8 701.3,713.0" fill="none" stroke="#5f6b75" stroke-width="2.800" stroke-dasharray="2.700 19.8" stroke-dashoffset="-6.0"/>
<polyline points="646.3,88.0 757.0,514.6 773.9,580.0 779.0,601.0 784.4,622.0 790.4,643.8 796.4,665.6 802.4,687.4 808.9,713.0" fill="none" stroke="#8d9094" stroke-width="0.7" stroke-opacity="0.85" stroke-dasharray="1.3 1.2"/>
<polyline points="646.3,88.0 757.0,514.6 773.9,580.0 779.0,601.0 784.4,622.0 790.4,643.8 796.4,665.6 802.4,687.4 808.9,713.0" fill="none" stroke="#5f6b75" stroke-width="2.800" stroke-dasharray="2.700 19.8" stroke-dashoffset="-13.0"/>
<polyline points="703.6,88.0 810.8,501.0 831.7,580.0 834.0,586.8 866.8,713.0" fill="none" stroke="#8d9094" stroke-width="0.7" stroke-opacity="0.85" stroke-dasharray="1.3 1.2"/>
<polyline points="703.6,88.0 810.8,501.0 831.7,580.0 834.0,586.8 866.8,713.0" fill="none" stroke="#5f6b75" stroke-width="2.800" stroke-dasharray="2.700 19.8" stroke-dashoffset="-3.0"/>
<polyline points="709.1,88.0 816.0,500.0 839.0,589.0 845.0,610.0 851.0,632.5 856.5,653.6 872.0,713.0" fill="none" stroke="#8d9094" stroke-width="0.7" stroke-opacity="0.85" stroke-dasharray="1.3 1.2"/>
<polyline points="709.1,88.0 816.0,500.0 839.0,589.0 845.0,610.0 851.0,632.5 856.5,653.6 872.0,713.0" fill="none" stroke="#5f6b75" stroke-width="2.800" stroke-dasharray="2.700 19.8" stroke-dashoffset="-10.0"/>
<polyline points="717.0,88.0 823.5,498.4 843.7,580.0 852.0,608.5 858.0,631.0 879.2,713.0" fill="none" stroke="#8d9094" stroke-width="0.7" stroke-opacity="0.85" stroke-dasharray="1.3 1.2"/>
<polyline points="717.0,88.0 823.5,498.4 843.7,580.0 852.0,608.5 858.0,631.0 879.2,713.0" fill="none" stroke="#5f6b75" stroke-width="2.800" stroke-dasharray="2.700 19.8" stroke-dashoffset="-17.0"/>
<polyline points="324.0,88.0 455.0,592.8 463.5,625.0 469.5,653.6 472.5,670.0 471.8,685.0 468.0,700.0 463.2,713.0" fill="none" stroke="#000" stroke-width="2.550" stroke-dasharray="2.350 3.300" stroke-dashoffset="0.0"/>
<polyline points="324.0,88.0 455.0,592.8 463.5,625.0 469.5,653.6 472.5,670.0 471.8,685.0 468.0,700.0 463.2,713.0" fill="none" stroke="#000" stroke-width="0.6" stroke-opacity="0.45"/>
<polyline points="388.1,88.0 515.0,577.0 519.0,589.0 522.0,607.0" fill="none" stroke="#000" stroke-width="2.550" stroke-dasharray="2.350 3.300" stroke-dashoffset="1.7"/>
<polyline points="388.1,88.0 515.0,577.0 519.0,589.0 522.0,607.0" fill="none" stroke="#000" stroke-width="0.6" stroke-opacity="0.45"/>
<polyline points="522.0,607.0 525.0,615.0 531.0,637.0 538.6,668.6 544.6,691.0 551.0,713.0" fill="none" stroke="#000" stroke-width="2.550" stroke-dasharray="2.350 3.300" stroke-dashoffset="3.4"/>
<polyline points="522.0,607.0 525.0,615.0 531.0,637.0 538.6,668.6 544.6,691.0 551.0,713.0" fill="none" stroke="#000" stroke-width="0.6" stroke-opacity="0.45"/>
<polyline points="522.0,607.0 522.5,625.0 521.8,646.0 519.8,661.0 516.0,682.0 511.6,700.0 505.0,713.0" fill="none" stroke="#000" stroke-width="2.550" stroke-dasharray="2.350 3.300" stroke-dashoffset="0.1"/>
<polyline points="522.0,607.0 522.5,625.0 521.8,646.0 519.8,661.0 516.0,682.0 511.6,700.0 505.0,713.0" fill="none" stroke="#000" stroke-width="0.6" stroke-opacity="0.45"/>
<polyline points="444.7,88.0 568.0,563.0 573.0,580.0 585.0,622.8 591.0,644.6 597.0,670.8 602.4,691.9 608.5,713.0" fill="none" stroke="#000" stroke-width="2.550" stroke-dasharray="2.350 3.300" stroke-dashoffset="1.8"/>
<polyline points="444.7,88.0 568.0,563.0 573.0,580.0 585.0,622.8 591.0,644.6 597.0,670.8 602.4,691.9 608.5,713.0" fill="none" stroke="#000" stroke-width="0.6" stroke-opacity="0.45"/>
<polyline points="503.1,88.0 622.7,549.0 630.5,580.0 638.0,605.5 646.3,635.6 656.8,676.0 665.6,713.0" fill="none" stroke="#000" stroke-width="2.550" stroke-dasharray="2.350 3.300" stroke-dashoffset="3.5"/>
<polyline points="503.1,88.0 622.7,549.0 630.5,580.0 638.0,605.5 646.3,635.6 656.8,676.0 665.6,713.0" fill="none" stroke="#000" stroke-width="0.6" stroke-opacity="0.45"/>
<polyline points="560.4,88.0 676.7,536.0 687.6,580.0 690.6,593.5 692.0,599.5" fill="none" stroke="#000" stroke-width="2.550" stroke-dasharray="2.350 3.300" stroke-dashoffset="0.2"/>
<polyline points="560.4,88.0 676.7,536.0 687.6,580.0 690.6,593.5 692.0,599.5" fill="none" stroke="#000" stroke-width="0.6" stroke-opacity="0.45"/>
<polyline points="692.0,599.5 695.0,607.0 702.6,640.0 713.0,676.0 722.6,713.0" fill="none" stroke="#000" stroke-width="2.550" stroke-dasharray="2.350 3.300" stroke-dashoffset="1.9"/>
<polyline points="692.0,599.5 695.0,607.0 702.6,640.0 713.0,676.0 722.6,713.0" fill="none" stroke="#000" stroke-width="0.6" stroke-opacity="0.45"/>
<polyline points="692.0,599.5 691.8,620.5 689.8,649.0 686.0,673.0 680.0,694.0 672.0,713.0" fill="none" stroke="#000" stroke-width="2.550" stroke-dasharray="2.350 3.300" stroke-dashoffset="3.6"/>
<polyline points="692.0,599.5 691.8,620.5 689.8,649.0 686.0,673.0 680.0,694.0 672.0,713.0" fill="none" stroke="#000" stroke-width="0.6" stroke-opacity="0.45"/>
<polyline points="617.2,88.0 730.0,522.5 745.4,580.0 755.0,619.0 764.0,653.6 771.6,683.6 779.6,713.0" fill="none" stroke="#000" stroke-width="2.550" stroke-dasharray="2.350 3.300" stroke-dashoffset="0.3"/>
<polyline points="617.2,88.0 730.0,522.5 745.4,580.0 755.0,619.0 764.0,653.6 771.6,683.6 779.6,713.0" fill="none" stroke="#000" stroke-width="0.6" stroke-opacity="0.45"/>
<polyline points="674.1,88.0 783.3,508.7 802.4,580.0 813.7,623.5 829.5,683.6 836.9,713.0" fill="none" stroke="#000" stroke-width="2.550" stroke-dasharray="2.350 3.300" stroke-dashoffset="2.0"/>
<polyline points="674.1,88.0 783.3,508.7 802.4,580.0 813.7,623.5 829.5,683.6 836.9,713.0" fill="none" stroke="#000" stroke-width="0.6" stroke-opacity="0.45"/>
<polyline points="739.4,88.0 844.5,493.0 902.3,713.0" fill="none" stroke="#000" stroke-width="2.550" stroke-dasharray="2.350 3.300" stroke-dashoffset="3.7"/>
<polyline points="739.4,88.0 844.5,493.0 902.3,713.0" fill="none" stroke="#000" stroke-width="0.6" stroke-opacity="0.45"/>
<polyline points="676.7,536.0 687.6,580.0 690.6,593.5 692.0,599.5" fill="none" stroke="#000" stroke-width="2.550" stroke-dasharray="2.350 3.300" stroke-dashoffset="2.8"/>
<polyline points="515.0,577.0 519.0,589.0 522.0,607.0" fill="none" stroke="#000" stroke-width="2.550" stroke-dasharray="2.350 3.300" stroke-dashoffset="2.8"/>
<polyline points="702.2,528.7 710.6,561.0" fill="none" stroke="#f0a874" stroke-width="0.9"/>
<polyline points="705.8,528.7 714.2,561.0" fill="none" stroke="#f0a874" stroke-width="0.9"/>
<polyline points="704.0,528.7 712.4,561.0" fill="none" stroke="#5f6f7c" stroke-width="1"/>
<polyline points="649.0,542.4 659.0,580.0 664.3,607.8 668.0,614.5 672.5,628.8 677.8,649.8 683.8,671.6 689.0,692.6 693.9,713.0" fill="none" stroke="#7c868e" stroke-width="0.9"/>
<rect x="451.8" y="589.6" width="6.4" height="6.4" fill="#000"/>
<rect x="511.8" y="573.8" width="6.4" height="6.4" fill="#000"/>
<rect x="564.8" y="559.8" width="6.4" height="6.4" fill="#000"/>
<rect x="619.5" y="545.8" width="6.4" height="6.4" fill="#000"/>
<rect x="726.8" y="519.3" width="6.4" height="6.4" fill="#000"/>
<rect x="780.1" y="505.5" width="6.4" height="6.4" fill="#000"/>
<rect x="841.3" y="489.8" width="6.4" height="6.4" fill="#000"/>
<rect x="430.7" y="596.4" width="6.2" height="6.2" fill="#808080"/>
<rect x="862.7" y="483.9" width="6.2" height="6.2" fill="#808080"/>
<rect x="473.2" y="584.4" width="6.2" height="6.2" fill="#808080"/>
<rect x="480.7" y="582.9" width="6.2" height="6.2" fill="#808080"/>
<rect x="485.2" y="582.2" width="6.2" height="6.2" fill="#808080"/>
<rect x="539.6" y="567.5" width="6.2" height="6.2" fill="#808080"/>
<rect x="592.9" y="553.9" width="6.2" height="6.2" fill="#808080"/>
<rect x="645.9" y="539.3" width="6.2" height="6.2" fill="#808080"/>
<rect x="700.9" y="525.6" width="6.2" height="6.2" fill="#808080"/>
<rect x="753.9" y="511.5" width="6.2" height="6.2" fill="#808080"/>
<rect x="807.7" y="497.9" width="6.2" height="6.2" fill="#808080"/>
<rect x="812.9" y="496.9" width="6.2" height="6.2" fill="#808080"/>
<rect x="820.4" y="495.3" width="6.2" height="6.2" fill="#808080"/>
<rect x="762.1" y="554.4" width="6.5" height="6.5" fill="#aaaaf4"/>
<rect x="807.5" y="554.4" width="6.5" height="6.5" fill="#aaaaf4"/>
<rect x="640.0" y="193.0" width="13.0" height="13.0" fill="#0000ff"/>
<rect x="670.0" y="529.0" width="13.0" height="13.0" fill="#ff0000"/>
<rect x="823.0" y="677.0" width="13.0" height="13.0" fill="#0000ff"/>
<text x="646.1" y="192.8" font-size="17.3" letter-spacing="-0.55" fill="#0000ff">NPC_1</text>
<text x="676.9" y="528.6" font-size="17.3" letter-spacing="-0.5" fill="#ff0000">Ego</text>
<text x="829" y="676.3" font-size="17.3" letter-spacing="-0.55" fill="#0000ff">NPC_2</text></svg></div>
<div style="position:absolute;left:188.0px;top:381.0px;width:250.0px;height:81.0px;box-sizing:border-box;background:#f1f1f1;border:1px solid #dcdcdc;box-shadow:2px 2px 3px rgba(0,0,0,0.32);"></div>
<div style="position:absolute;left:214.5px;top:383.0px;width:2.0px;height:77.0px;background:#f8f8f8;"></div>
<span class="t " style="left:220.3px;top:385.7px;font-size:11.50px;color:#1a1a1a;transform:scaleX(0.9365);">Set ParameterDeclarations</span>
<div style="position:absolute;left:186.0px;top:409.0px;width:252.5px;height:28.0px;box-sizing:border-box;background:#91c9f7;border:4px solid #e8111c;"></div>
<span class="t " style="left:220.3px;top:414.0px;font-size:11.50px;color:#1a1a1a;transform:scaleX(0.9517);">Add Event</span>
<span class="t " style="left:220.3px;top:443.3px;font-size:11.50px;color:#1a1a1a;transform:scaleX(0.9741);">Delete Maneuver - MyManeuver</span>
<span class="t " style="left:404.5px;top:443.3px;font-size:11.50px;color:#1a1a1a;transform:scaleX(0.9272);">Del</span>
</div></body></html>
